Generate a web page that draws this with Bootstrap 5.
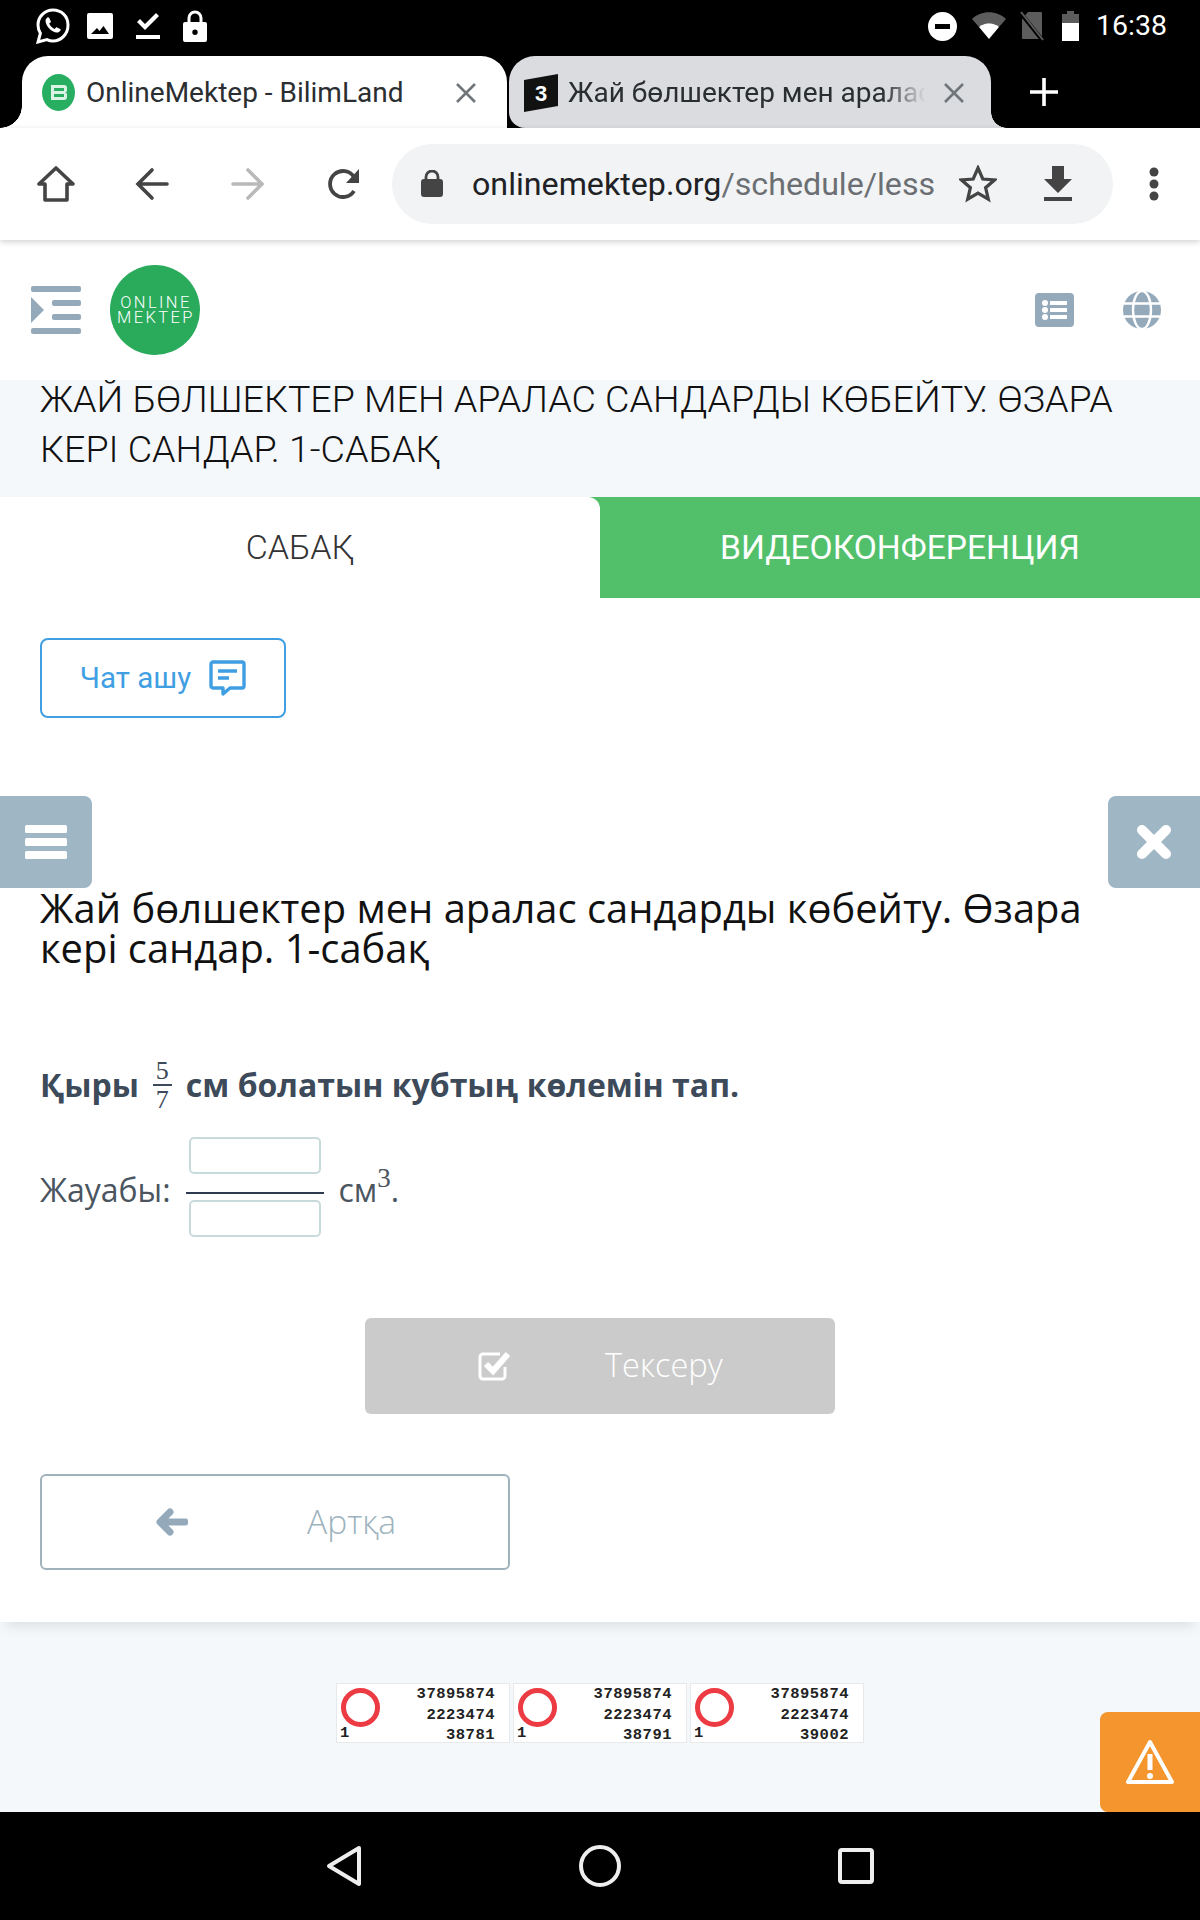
<!DOCTYPE html>
<html lang="kk">
<head>
  <meta charset="UTF-8" />
  <meta name="viewport" content="width=device-width, initial-scale=1.0" />
  <title>OnlineMektep - BilimLand</title>
  <link href="https://cdn.jsdelivr.net/npm/bootstrap@5.3.0/dist/css/bootstrap.min.css" rel="stylesheet" />
  <style>
    html, body { background: #000; }
    .phone { width: 1200px; height: 1920px; position: relative; overflow: hidden; font-family: "Open Sans", sans-serif; background: #fff; }

    /* android + chrome bars */
    .status-bar { height: 56px; background: #000; color: #fff; padding: 0 33px 4px 36px; font-family: Roboto, sans-serif; font-size: 28.5px; }
    .status-left { gap: 23px; }
    .status-left svg:first-child { margin-right: -6px; }
    .status-right { gap: 15px; }
    .status-right svg:nth-child(3) { margin-left: -3px; margin-right: 3px; }
    .status-right .clock { margin-left: 2px; line-height: 1; }
    .status-bar svg, .chrome-tab svg, .toolbar svg { flex: none; }
    .tab-strip { height: 72px; background: #000; padding-left: 22px; font-family: Roboto, sans-serif; font-size: 28px; }
    .chrome-tab { width: 485px; height: 72px; position: relative; padding: 1px 20px 0 20px; border-radius: 26px 26px 0 0; gap: 11px; white-space: nowrap; color: #2b2e31; }
    .chrome-tab.active-tab { background: #fff; }
    .chrome-tab.active-tab::before { content: ""; position: absolute; left: -22px; bottom: 0; width: 22px; height: 22px; background: radial-gradient(circle at 0 0, #000 21.5px, #fff 22px); }
    .chrome-tab.other-tab { background: #dadce0; width: 482px; margin-left: 2px; padding-left: 15px; gap: 10px; border-radius: 26px 26px 0 16px; }
    .chrome-tab.other-tab::after { content: ""; position: absolute; right: -16px; bottom: 0; width: 16px; height: 16px; background: radial-gradient(circle at 100% 0, #000 15.5px, #dadce0 16px); }
    .tab-title { flex: 1 1 auto; }
    .other-tab .tab-title { -webkit-mask-image: linear-gradient(90deg, #000 86%, transparent 98%); mask-image: linear-gradient(90deg, #000 86%, transparent 98%); }
    .tab-close-a { margin-right: 10px; }
    .tab-close-b { margin-right: 14px; }
    .new-tab { margin-left: 38px; }
    .toolbar { height: 112px; background: #fff; padding-left: 32px; box-shadow: 0 2px 6px rgba(0,0,0,.18); position: relative; z-index: 2; }
    .tool-btn { width: 48px; height: 48px; margin-right: 48px; flex: none; }
    .tool-btn:nth-child(4) { margin-right: 24px; }
    .omnibox { width: 721px; height: 80px; background: #f1f3f4; border-radius: 40px; padding: 0 44px 0 29px; font-family: Roboto, sans-serif; font-size: 32.2px; flex: none; }
    .omni-url { margin-left: 29px; color: #202124; white-space: nowrap; width: 461px; flex: none; padding-top: 1px; }
    .omni-url span { color: #6b6f73; }
    .omni-star { margin-left: 26px; }
    .omni-dl { margin-left: 47px; }
    .more-dots { margin-left: 36px; }

    /* site */
    .site-head { height: 140px; background: #fff; padding: 0 0 0 31px; }
    .logo-round { width: 90px; height: 90px; margin-left: 29px; border-radius: 50%; background: #2aab5c; color: #fff; font-family: Roboto, sans-serif; font-size: 16.5px; line-height: 15px; text-align: center; font-weight: 300; letter-spacing: 2.4px; padding-left: 2px; flex: none; }
    .head-icons { margin-left: auto; margin-right: 39px; gap: 49px; }
    .title-band { height: 117px; background: #f5f8fb; padding: 0 40px; color: #111; font-family: Roboto, sans-serif; font-weight: 300; font-size: 37.6px; line-height: 50px; overflow: hidden; }
    .title-text { margin-top: -6px; }
    .lesson-tabs { height: 101px; background: #52bf6a; font-family: Roboto, sans-serif; font-size: 34px; }
    .lesson-tab { width: 50%; }
    .lesson-tab.current { color: #333; font-weight: 300; background: #fff; border-radius: 0 12px 0 0; }
    .lesson-tab.video { color: #fff; font-weight: 400; font-size: 33.6px; padding-top: 2px; }
    .chat-wrap { padding: 40px 40px 0; height: 198px; }
    .chat-btn { width: 246px; height: 80px; border: 2px solid #3f9fe2; border-radius: 8px; color: #3f9fe2; background: #fff; font-family: Roboto, sans-serif; font-weight: 400; font-size: 29.5px; gap: 18px; padding: 0; }
    .side-btn { position: absolute; top: 796px; width: 92px; height: 92px; background: #9fb6c4; z-index: 3; }
    .side-btn.left-one { left: 0; border-radius: 0 8px 8px 0; }
    .side-btn.right-one { right: 0; border-radius: 8px 0 0 8px; }
    .lesson-body { padding: 92px 40px 0; height: 826px; background: #fff; position: relative; z-index: 1; box-shadow: 0 10px 12px -6px rgba(0,0,0,.1); }
    .lesson-title { margin: 0; color: #111; font-family: "Open Sans", sans-serif; font-weight: 400; font-size: 39.9px; line-height: 40px; }
    .question { margin-top: 82px; height: 70px; color: #3d4a59; font-weight: 700; font-size: 32px; gap: 14px; white-space: nowrap; }
    .frac { display: inline-flex; flex-direction: column; align-items: center; font-family: "Liberation Serif", serif; font-weight: 400; font-size: 26px; line-height: 27px; color: #3d4a59; }
    .frac i { font-style: normal; }
    .frac b { display: block; height: 2px; width: 19px; background: #3d4a59; }
    .answer { margin-top: 12px; color: #4a5560; font-size: 32px; white-space: nowrap; height: 110px; }
    .answer > span { padding-top: 6px; }
    .input-frac { width: 138px; margin: 0 15px 0 15px; flex: none; }
    .input-frac input { display: block; width: 132px; height: 37px; margin: 0 auto; padding: 0; border: 2px solid #c9dadd; border-radius: 5px; background: #fff; }
    .input-frac hr { margin: 18px 0 6px; border: 0; height: 2px; background: #2e3a4e; opacity: 1; }
    .answer sup { font-family: "Liberation Serif", serif; font-size: 27px; top: -.55em; }
    .act-btn { width: 470px; height: 96px; border-radius: 6px; font-family: "Open Sans", sans-serif; font-weight: 300; font-size: 32.6px; padding: 0 0 0 113px; display: flex; align-items: center; justify-content: flex-start; }
    .act-btn span { padding-bottom: 2px; }
    .btn.check-btn:disabled { background: #cbcbcb; color: #fff; border: 0; margin: 76px auto 0; opacity: 1; }
    .check-btn span { margin-left: 93px; }
    .back-btn { background: #fff; color: #9cb2bd; border: 2px solid #a0b3bd; margin-top: 60px; padding-left: 114px; font-size: 33.6px; }
    .back-btn span { margin-left: 119px; }
    .site-foot { height: 190px; background: #f5f8fb; padding-top: 61px; gap: 3px; position: relative; }
    .counter-tile { width: 174px; height: 60px; background: #fff; border: 1px solid #e7e9eb; padding: 0 14px 0 4px; font-family: "Liberation Mono", monospace; font-weight: 700; font-size: 15.5px; letter-spacing: .5px; line-height: 20.5px; color: #222; position: relative; text-align: right; }
    .counter-tile em { font-style: normal; position: absolute; left: 3px; bottom: -1px; }
    .counter-ring { position: absolute; left: 4px; top: 4px; width: 39px; height: 39px; border: 5px solid #ec3b42; border-radius: 50%; }
    .warn-btn { position: absolute; right: 0; top: 90px; width: 100px; height: 100px; background: #f4952d; border-radius: 8px 0 0 8px; }
    .nav-bar { height: 108px; background: #000; position: relative; }
    .nav-bar svg { flex: none; }
    .nav-slot { width: 256px; }
  </style>
</head>
<body>
<div class="phone">

  <div class="status-bar d-flex align-items-center justify-content-between">
    <div class="status-left d-flex align-items-center">
      <svg width="34" height="36" viewBox="0 0 34 36"><path d="M17 2C8.700 2 2 8.700 2 17c0 3 .9 5.800 2.400 8.200L2 34l9-2.400c1.800.9 3.900 1.400 6 1.400 8.300 0 15-7 15-16S25.300 2 17 2z" fill="none" stroke="#fff" stroke-width="3"/><path d="M11.500 9.500c-1.400 1-2.200 2.500-1.900 4.300.8 4.900 5.400 9.800 10.600 10.700 1.700.3 3.400-.5 4.300-2 .3-.6.200-1.100-.3-1.400l-3.200-1.700c-.5-.2-.9-.1-1.200.3l-1.100 1.300c-2.500-1-4.500-3-5.500-5.500l1.300-1c.4-.3.500-.8.300-1.200l-1.600-3.300c-.4-.6-1.100-.8-1.700-.5z" fill="#fff"/></svg>
      <svg width="26" height="26" viewBox="0 0 26 26"><path d="M2 0h22a2 2 0 0 1 2 2v22a2 2 0 0 1-2 2H2a2 2 0 0 1-2-2V2a2 2 0 0 1 2-2zm2 21h18l-5.500-8-4 5-2.500-3z" fill="#fff" fill-rule="evenodd"/></svg>
      <svg width="24" height="28" viewBox="0 0 24 28"><path d="M1 10l3-3 5 5L20 1l3 3L9 18z" fill="#fff"/><rect y="23" width="24" height="4" fill="#fff"/></svg>
      <svg width="24" height="32" viewBox="0 0 24 32"><path d="M6 13V8a6 6 0 0 1 12 0v5" fill="none" stroke="#fff" stroke-width="3"/><path d="M2 12h20a2 2 0 0 1 2 2v16a2 2 0 0 1-2 2H2a2 2 0 0 1-2-2V14a2 2 0 0 1 2-2zm10 7.500a2.700 2.700 0 1 0 0 5.400 2.700 2.700 0 0 0 0-5.400z" fill="#fff" fill-rule="evenodd"/></svg>
    </div>
    <div class="status-right d-flex align-items-center">
      <svg width="29" height="29" viewBox="0 0 29 29"><path d="M14.500 0a14.500 14.500 0 1 0 0 29 14.500 14.500 0 0 0 0-29zM7 12h15v5H7z" fill="#fff" fill-rule="evenodd"/></svg>
      <svg width="34" height="28" viewBox="0 0 34 28"><path d="M0 7C9-2 25-2 34 7L27 15C21 10 13 10 7 15z" fill="#5c5c5c"/><path d="M7 15c6-5 14-5 20 0L17 27z" fill="#fff"/></svg>
      <svg width="26" height="32" viewBox="0 0 26 32"><path d="M10 2h13a1 1 0 0 1 1 1v25a1 1 0 0 1-1 1H5a1 1 0 0 1-1-1V9z" fill="#5c5c5c"/><path d="M1 1l24 30" stroke="#000" stroke-width="4"/><path d="M3 2l22 28" stroke="#5c5c5c" stroke-width="2"/></svg>
      <svg width="17" height="30" viewBox="0 0 17 30"><path d="M5 0h7v3h5v9H0V3h5z" fill="#5c5c5c"/><rect y="12" width="17" height="18" fill="#fff"/></svg>
      <span class="clock">16:38</span>
    </div>
  </div>

  <div class="tab-strip d-flex">
    <div class="chrome-tab active-tab d-flex align-items-center">
      <svg width="33" height="37" viewBox="0 0 33 37"><ellipse cx="16.500" cy="18.500" rx="16.500" ry="18.500" fill="#27ae60"/><path d="M9 11h13a3 3 0 0 1 3 3v2.500a2 2 0 0 1-2 2 2 2 0 0 1 2 2V23a3 3 0 0 1-3 3H9zM12 14v3h10v-3zM12 20v3h10v-3z" fill="#d9f3e4" fill-rule="evenodd"/></svg>
      <span class="tab-title">OnlineMektep - BilimLand</span>
      <svg class="tab-close-a" width="22" height="22" viewBox="0 0 22 22"><path d="M2 2l18 18M20 2L2 20" stroke="#70757a" stroke-width="2.600"/></svg>
    </div>
    <div class="chrome-tab other-tab d-flex align-items-center">
      <svg width="34" height="38" viewBox="0 0 34 38"><path d="M0 6L34 0v32L0 38z" fill="#111"/><text x="17" y="27" text-anchor="middle" font-family="Liberation Sans" font-weight="700" font-size="22" fill="#fff">3</text></svg>
      <span class="tab-title">Жай бөлшектер мен аралас</span>
      <svg class="tab-close-b" width="22" height="22" viewBox="0 0 22 22"><path d="M2 2l18 18M20 2L2 20" stroke="#70757a" stroke-width="2.600"/></svg>
    </div>
    <div class="new-tab d-flex align-items-center">
      <svg width="30" height="30" viewBox="0 0 30 30"><path d="M15 1v28M1 15h28" stroke="#fff" stroke-width="3.600"/></svg>
    </div>
  </div>

  <div class="toolbar d-flex align-items-center">
    <div class="tool-btn d-flex align-items-center justify-content-center">
      <svg width="38" height="38" viewBox="0 0 38 38"><path d="M19 3L2 19h6v16h22V19h6z" fill="none" stroke="#444" stroke-width="3.600" stroke-linejoin="round"/></svg>
    </div>
    <div class="tool-btn d-flex align-items-center justify-content-center">
      <svg width="34" height="34" viewBox="0 0 34 34"><path d="M32 17H4M17 3L3 17l14 14" fill="none" stroke="#444" stroke-width="3.600" stroke-linecap="round"/></svg>
    </div>
    <div class="tool-btn d-flex align-items-center justify-content-center">
      <svg width="34" height="34" viewBox="0 0 34 34"><path d="M2 17h28M17 3l14 14-14 14" fill="none" stroke="#b9b9b9" stroke-width="3.600" stroke-linecap="round"/></svg>
    </div>
    <div class="tool-btn d-flex align-items-center justify-content-center">
      <svg width="34" height="34" viewBox="0 0 34 34"><path d="M27 24a13 13 0 1 1 0-14" fill="none" stroke="#444" stroke-width="3.800"/><path d="M32 2v14H19z" fill="#444"/></svg>
    </div>
    <div class="omnibox d-flex align-items-center">
      <svg width="22" height="28" viewBox="0 0 22 28"><path d="M5 11V7a6 6 0 0 1 12 0v4" fill="none" stroke="#444" stroke-width="2.800"/><rect y="9" width="22" height="18" rx="3" fill="#444"/></svg>
      <div class="omni-url">onlinemektep.org<span>/schedule/less</span></div>
      <svg class="omni-star" width="38" height="38" viewBox="0 0 38 38"><path d="M19 3l4.800 11 11.700 1-8.900 7.700 2.700 11.500L19 28.100 8.700 34.200l2.700-11.500L2.500 15l11.700-1z" fill="none" stroke="#444" stroke-width="3.200"/></svg>
      <svg class="omni-dl" width="28" height="36" viewBox="0 0 28 36"><path d="M8 0h12v13h8L14 27 0 13h8z" fill="#444"/><rect y="31" width="28" height="4" fill="#444"/></svg>
    </div>
    <svg class="more-dots" width="10" height="34" viewBox="0 0 10 34"><circle cx="5" cy="5" r="4.500" fill="#444"/><circle cx="5" cy="17" r="4.500" fill="#444"/><circle cx="5" cy="29" r="4.500" fill="#444"/></svg>
  </div>

  <header class="site-head d-flex align-items-center">
    <svg width="50" height="48" viewBox="0 0 50 48"><g fill="#94a9ba"><rect width="50" height="6" rx="2"/><rect x="21" y="14" width="29" height="6" rx="2"/><rect x="21" y="28" width="29" height="6" rx="2"/><rect y="42" width="50" height="6" rx="2"/><path d="M0 11l13 13L0 37z"/></g></svg>
    <div class="logo-round d-flex align-items-center justify-content-center"><div>ONLINE<br>MEKTEP</div></div>
    <div class="head-icons d-flex align-items-center">
      <svg width="39" height="34" viewBox="0 0 39 34"><rect width="39" height="34" rx="4" fill="#94a9ba"/><g fill="#fff"><circle cx="10" cy="10" r="3"/><circle cx="10" cy="17" r="3"/><circle cx="10" cy="24" r="3"/><rect x="15" y="8" width="17" height="4"/><rect x="15" y="15" width="17" height="4"/><rect x="15" y="22" width="17" height="4"/></g></svg>
      <svg width="38" height="38" viewBox="0 0 38 38"><circle cx="19" cy="19" r="19" fill="#94a9ba"/><g fill="none" stroke="#fff" stroke-width="2.400"><ellipse cx="19" cy="19" rx="9" ry="19"/><path d="M1 12.500h36M1 25.500h36"/></g></svg>
    </div>
  </header>

  <div class="title-band"><div class="title-text">ЖАЙ БӨЛШЕКТЕР МЕН АРАЛАС САНДАРДЫ КӨБЕЙТУ. ӨЗАРА КЕРІ САНДАР. 1-САБАҚ</div></div>

  <div class="lesson-tabs d-flex">
    <div class="lesson-tab current d-flex align-items-center justify-content-center">САБАҚ</div>
    <div class="lesson-tab video d-flex align-items-center justify-content-center">ВИДЕОКОНФЕРЕНЦИЯ</div>
  </div>

  <div class="chat-wrap">
    <button type="button" class="btn chat-btn d-flex align-items-center justify-content-center">
      Чат ашу
      <svg width="37" height="36" viewBox="0 0 37 36"><path d="M4 2h29a2 2 0 0 1 2 2v22a2 2 0 0 1-2 2H21l-7 6v-6H4a2 2 0 0 1-2-2V4a2 2 0 0 1 2-2z" fill="none" stroke="#3f9fe2" stroke-width="3.400" stroke-linejoin="round"/><path d="M9 11h19M9 18h11" stroke="#3f9fe2" stroke-width="3.400"/></svg>
    </button>
  </div>

  <div class="side-btn left-one d-flex align-items-center justify-content-center">
    <svg width="42" height="34" viewBox="0 0 42 34"><g fill="#fff"><rect width="42" height="8" rx="1.500"/><rect y="13" width="42" height="8" rx="1.500"/><rect y="26" width="42" height="8" rx="1.500"/></g></svg>
  </div>
  <div class="side-btn right-one d-flex align-items-center justify-content-center">
    <svg width="36" height="34" viewBox="0 0 36 34"><path d="M6 5l24 24M30 5L6 29" stroke="#fff" stroke-width="10" stroke-linecap="round"/></svg>
  </div>

  <main class="lesson-body">
    <h1 class="lesson-title">Жай бөлшектер мен аралас сандарды көбейту. Өзара кері сандар. 1-сабақ</h1>
    <div class="question d-flex align-items-center">
      <span>Қыры</span>
      <span class="frac"><i>5</i><b></b><i>7</i></span>
      <span>см болатын кубтың көлемін тап.</span>
    </div>
    <div class="answer d-flex align-items-center">
      <span>Жауабы:</span>
      <div class="input-frac">
        <input type="text" aria-label="алымы" />
        <hr />
        <input type="text" aria-label="бөлімі" />
      </div>
      <span>см<sup>3</sup>.</span>
    </div>
    <button type="button" class="btn act-btn check-btn" disabled>
      <svg width="34" height="30" viewBox="0 0 34 30"><path d="M27 16v9a3 3 0 0 1-3 3H5a3 3 0 0 1-3-3V6a3 3 0 0 1 3-3h17" fill="none" stroke="#fff" stroke-width="3"/><path d="M8 13l7 7L30 3" fill="none" stroke="#fff" stroke-width="6"/></svg>
      <span>Тексеру</span>
    </button>
    <button type="button" class="btn act-btn back-btn">
      <svg width="32" height="28" viewBox="0 0 32 28"><path d="M14 4L4 14l10 10M5 14h24" fill="none" stroke="#94a9ba" stroke-width="7" stroke-linecap="round" stroke-linejoin="round"/></svg>
      <span>Артқа</span>
    </button>
  </main>

  <footer class="site-foot d-flex justify-content-center">
    <div class="counter-tile"><div class="counter-ring"></div>37895874<br>2223474<br>38781<em>1</em></div>
    <div class="counter-tile"><div class="counter-ring"></div>37895874<br>2223474<br>38791<em>1</em></div>
    <div class="counter-tile"><div class="counter-ring"></div>37895874<br>2223474<br>39002<em>1</em></div>
    <div class="warn-btn d-flex align-items-center justify-content-center">
      <svg width="50" height="46" viewBox="0 0 50 46"><path d="M25 3L3 43h44z" fill="none" stroke="#fff" stroke-width="4" stroke-linejoin="round"/><path d="M25 15v16" stroke="#fff" stroke-width="5"/><circle cx="25" cy="37" r="3" fill="#fff"/></svg>
    </div>
  </footer>

  <div class="nav-bar d-flex align-items-center justify-content-center">
    <div class="nav-slot d-flex justify-content-center"><svg width="36" height="42" viewBox="0 0 36 42"><path d="M33 3L3 21l30 18z" fill="none" stroke="#eee" stroke-width="4" stroke-linejoin="round"/></svg></div>
    <div class="nav-slot d-flex justify-content-center"><svg width="42" height="42" viewBox="0 0 42 42"><circle cx="21" cy="21" r="19" fill="none" stroke="#eee" stroke-width="4"/></svg></div>
    <div class="nav-slot d-flex justify-content-center"><svg width="36" height="36" viewBox="0 0 36 36"><rect x="2" y="2" width="32" height="32" rx="2" fill="none" stroke="#eee" stroke-width="4"/></svg></div>
  </div>
</div>
<script src="https://cdn.jsdelivr.net/npm/bootstrap@5.3.0/dist/js/bootstrap.bundle.min.js"></script>
</body>
</html>
